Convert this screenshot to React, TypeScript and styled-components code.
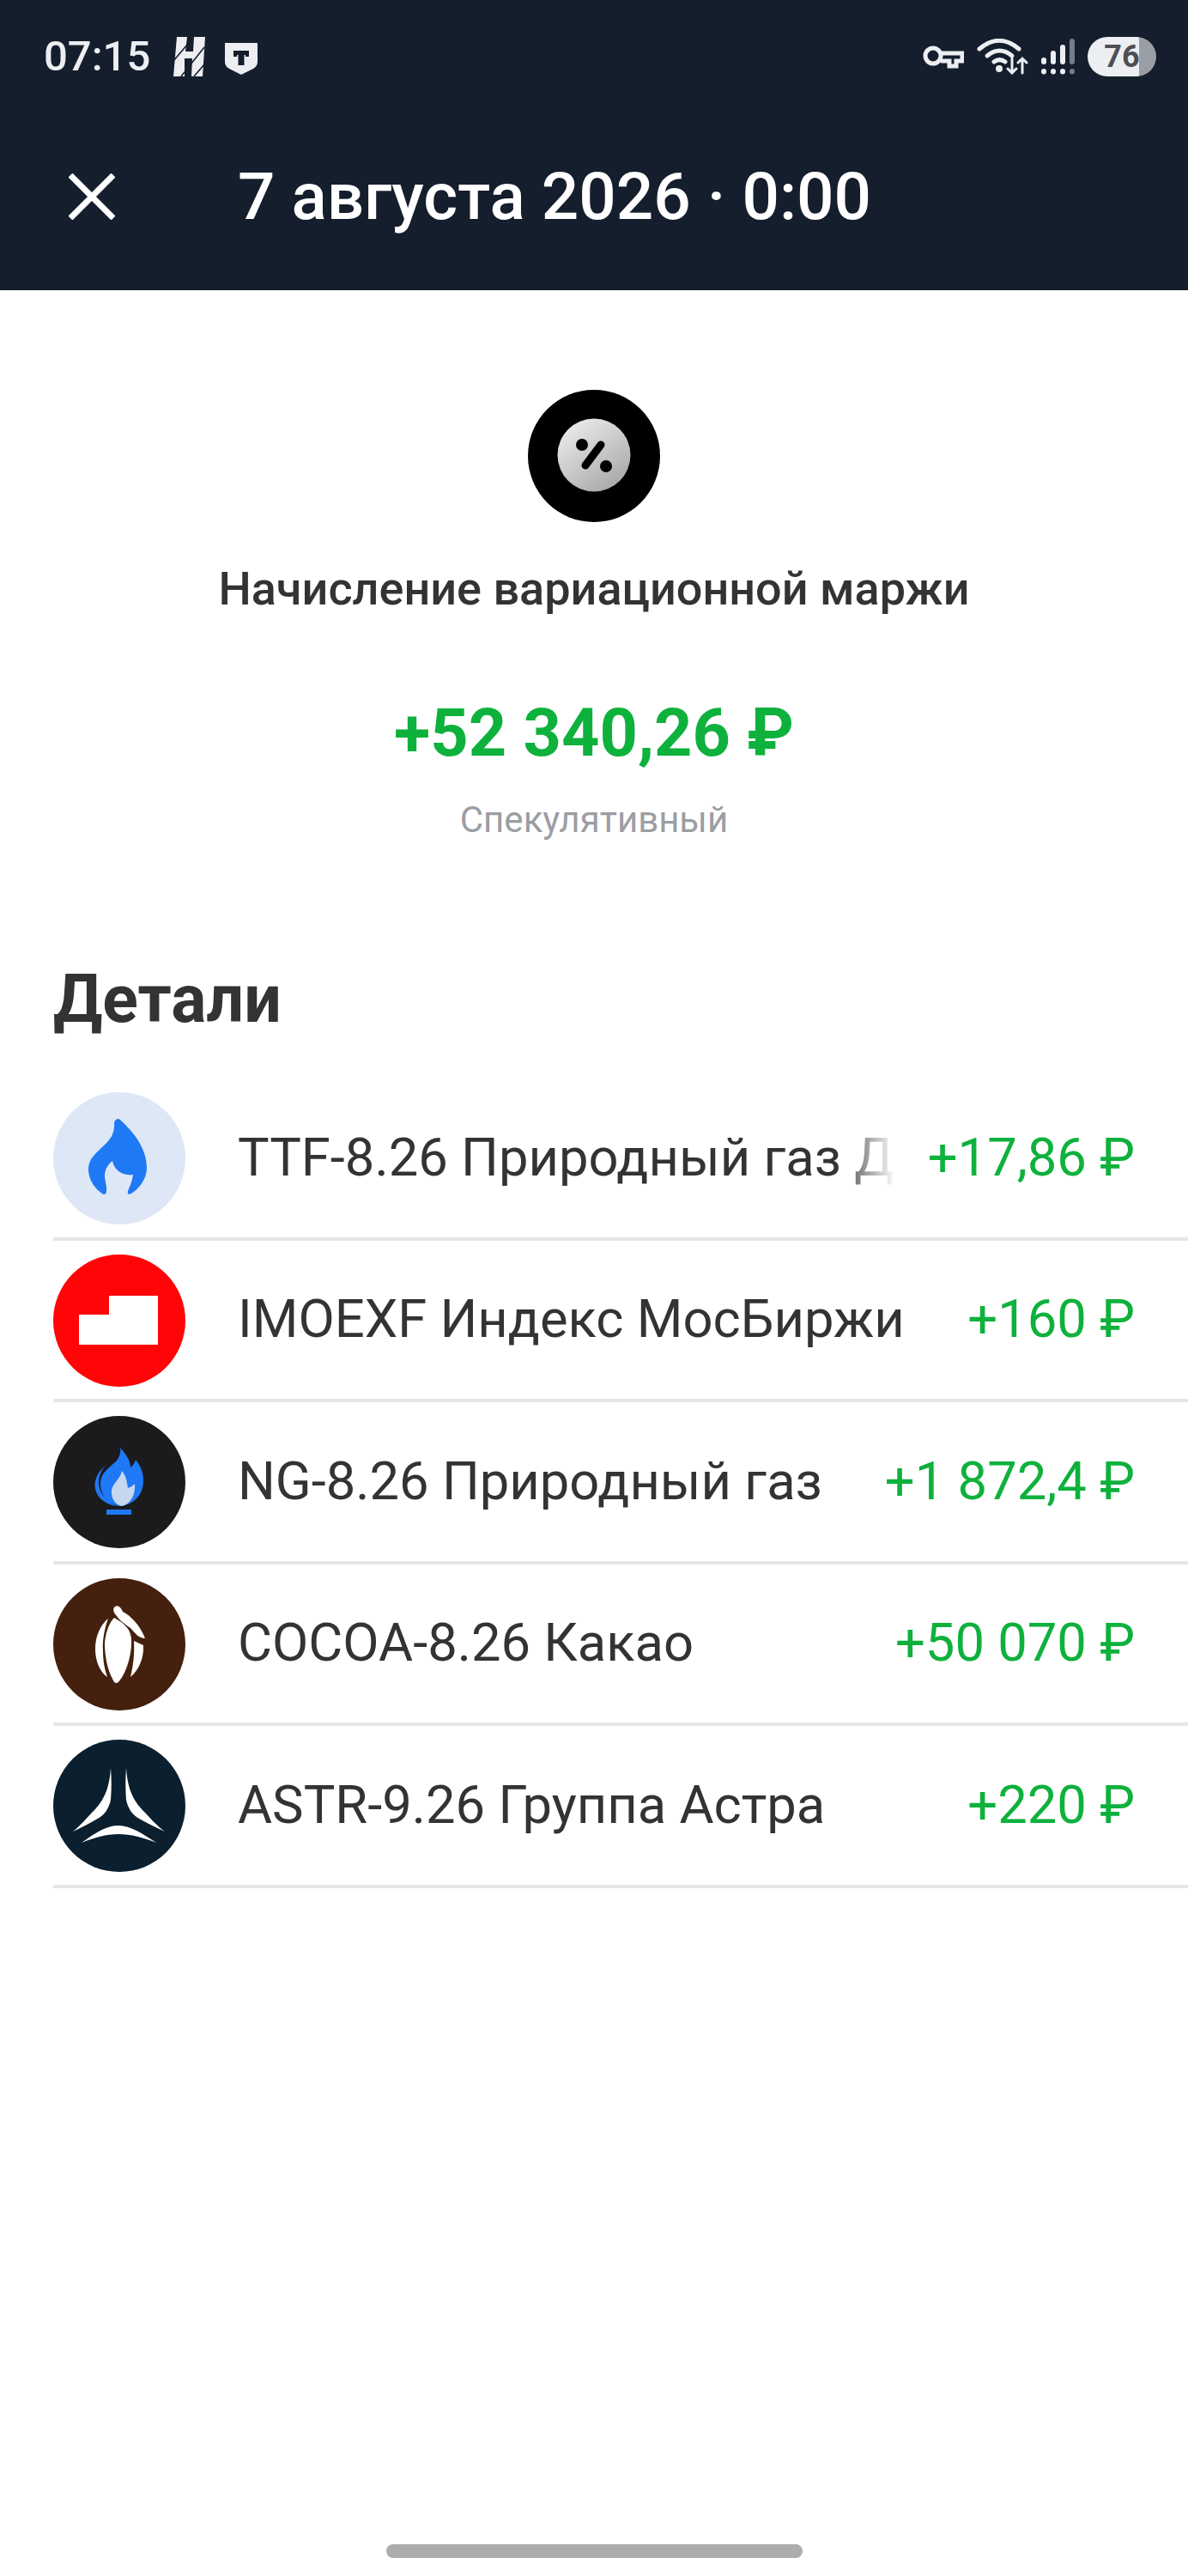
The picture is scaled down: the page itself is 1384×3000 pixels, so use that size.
import React from 'react';
import styled, { createGlobalStyle } from 'styled-components';

const GlobalStyle = createGlobalStyle`
  html, body { margin: 0; padding: 0; background: #fff; }
  body { font-family: Roboto, "Noto Sans", sans-serif; }
`;

const Page = styled.div`
  width: 1384px;
  height: 3000px;
  display: flex;
  flex-direction: column;
  overflow: hidden;
  background: #fff;
`;

const Header = styled.header`
  height: 338px;
  flex: none;
  background: #151e2d;
  color: #fff;
`;

const StatusBar = styled.div`
  height: 50px;
  padding: 41px 37px 0 51px;
  display: flex;
  align-items: center;
`;

const Time = styled.span`
  font-size: 49px;
  font-weight: 500;
  line-height: 50px;
  color: #eceef2;
  margin-right: 27px;
`;

const StatusGlyph = styled.svg<{ $gap?: number }>`
  display: block;
  flex: none;
  margin-right: ${(p) => p.$gap ?? 0}px;
`;

const Spring = styled.div`
  flex: 1;
`;

const Battery = styled.div`
  width: 80px;
  height: 46px;
  border-radius: 23px;
  flex: none;
  background: linear-gradient(90deg, #eceef1 0 75%, #9a9ea5 75% 100%);
  color: #4c4f54;
  font-size: 36px;
  font-weight: 700;
  line-height: 46px;
  text-align: center;
`;

const TitleBar = styled.div`
  display: flex;
  align-items: center;
  padding: 93px 0 0 80px;
  height: 90px;
`;

const Close = styled.svg`
  display: block;
  width: 54px;
  height: 54px;
  margin-right: 143px;
`;

const Title = styled.h1`
  margin: 0;
  font-size: 76.5px;
  font-weight: 500;
  line-height: 90px;
  white-space: nowrap;
`;

const Hero = styled.section`
  display: flex;
  flex-direction: column;
  align-items: center;
  padding-top: 116px;
`;

const OpIcon = styled.svg`
  display: block;
  width: 154px;
  height: 154px;
`;

const OpName = styled.div`
  margin-top: 48px;
  font-size: 54px;
  font-weight: 500;
  line-height: 60px;
  color: #333;
`;

const Total = styled.div`
  margin-top: 93px;
  font-size: 77.5px;
  font-weight: 700;
  line-height: 90px;
  color: #0eb13c;
`;

const Kind = styled.div`
  margin-top: 31px;
  font-size: 42px;
  line-height: 50px;
  color: #9a9ea4;
`;

const SectionTitle = styled.h2`
  margin: 139px 0 47px 62px;
  font-size: 77px;
  font-weight: 700;
  line-height: 90px;
  color: #333;
`;

const List = styled.div`
  margin-left: 62px;
`;

const Row = styled.div`
  display: flex;
  align-items: center;
  padding: 16px 62px 14.5px 0;
  border-bottom: 4px solid #e6e6e6;
`;

const Avatar = styled.svg`
  display: block;
  flex: none;
  width: 154px;
  height: 154px;
  margin-right: 61px;
`;

const Name = styled.div<{ $fade?: boolean }>`
  flex: 1;
  min-width: 0;
  margin-top: -3px;
  font-size: 61.5px;
  line-height: 70px;
  color: #333;
  white-space: nowrap;
  ${(p) =>
    p.$fade &&
    `
    -webkit-mask-image: linear-gradient(90deg, #000 calc(100% - 70px), transparent 100%);
    mask-image: linear-gradient(90deg, #000 calc(100% - 70px), transparent 100%);
  `}
`;

const Amount = styled.div`
  flex: none;
  margin-left: 38px;
  margin-top: -3px;
  font-size: 61.5px;
  line-height: 70px;
  color: #0eb13c;
  white-space: nowrap;
`;

const HomeBar = styled.div`
  width: 485px;
  height: 16px;
  flex: none;
  margin: auto auto 21px;
  border-radius: 8px;
  background: #adadad;
`;

const rows = [
  { id: 'ttf', name: 'TTF-8.26 Природный газ Д', amount: '+17,86 ₽', fade: true },
  { id: 'moex', name: 'IMOEXF Индекс МосБиржи', amount: '+160 ₽' },
  { id: 'ng', name: 'NG-8.26 Природный газ', amount: '+1 872,4 ₽' },
  { id: 'cocoa', name: 'COCOA-8.26 Какао', amount: '+50 070 ₽' },
  { id: 'astr', name: 'ASTR-9.26 Группа Астра', amount: '+220 ₽' },
];

function Logo({ id }: { id: string }) {
  if (id === 'ttf') {
    return (
      <Avatar viewBox="0 0 154 154">
        <circle cx="77" cy="77" r="77" fill="#dde7f5" />
        <path
          fill="#2079f4"
          d="M73 32C75 30 77 31 79 33C93 46 109 65 109 88C109 102 99 113 91 118C88 120 86 118 87 115C89 110 92 104 93 96C86 97 72 95 69 80C64 84 60 90 60 97C60 103 63 110 62 115C62 119 59 120 57 118C49 113 41 102 41 90C41 77 50 71 58 63C66 56 72 48 71 36C71 34 72 33 73 32Z"
        />
      </Avatar>
    );
  }
  if (id === 'moex') {
    return (
      <Avatar viewBox="0 0 154 154">
        <circle cx="77" cy="77" r="77" fill="#ff0508" />
        <polygon fill="#fff" points="30,70 65,70 65,48 122,48 122,105 30,105" />
      </Avatar>
    );
  }
  if (id === 'ng') {
    return (
      <Avatar viewBox="0 0 154 154">
        <circle cx="77" cy="77" r="77" fill="#1b1b1d" />
        <rect x="62" y="109" width="29" height="6" fill="#1f78f5" />
        <path fill="#1f78f5" d="M61 58C52 64 47 76 49 85C51 95 60 102 72 105C62 98 53 90 53 78C53 70 56 63 61 58Z" />
        <path
          fill="#1f78f5"
          d="M78 37C85 45 90 52 90 60C93 58 95 54 96 51C102 58 105 66 105 76C105 92 93 104 78 105C64 104 55 92 55 79C55 66 66 60 74 52C77 48 79 43 78 37Z"
        />
        <path fill="#c6d6ee" d="M80 64C85 70 86 77 87 84C90 83 93 81 95 79C96 92 90 103 80 105C73 104 67 96 68 87C69 78 78 74 80 64Z" />
      </Avatar>
    );
  }
  if (id === 'cocoa') {
    return (
      <Avatar viewBox="0 0 154 154">
        <circle cx="77" cy="77" r="77" fill="#45200e" />
        <g fill="#fff">
          <path d="M71 34C75 30 79 34 81 39C90 43 102 56 107 70C100 70 96 65 90 58C84 54 76 48 74 44C71 41 69 37 71 34Z" />
          <path d="M71 46C84 53 90 60 91 70C92 85 87 108 76 121C73 123 71 122 69 117C63 106 60 90 60 76C61 63 65 52 71 46Z" />
          <path d="M64 47C60 58 57 72 58 85C58 97 60 106 63 115C54 109 49 96 49 82C49 68 55 54 64 47Z" />
          <path d="M94 73L105 78C106 92 100 107 90 115C93 103 95 88 94 73Z" />
        </g>
      </Avatar>
    );
  }
  return (
    <Avatar viewBox="0 0 154 154">
      <circle cx="77" cy="77" r="77" fill="#0b1f2e" />
      <g fill="#fff">
        <path d="M67 33C66 50 62 68 48 82C40 90 32 100 23 107C33 102 42 98 50 93C60 88 65 80 67 70C68 58 68 45 67 33Z" />
        <path d="M85 33C86 50 90 68 104 82C112 90 120 100 130 107C120 102 110 98 102 93C92 88 87 80 85 70C84 58 84 45 85 33Z" />
        <path d="M33 120C50 108 62 100 76 100C90 100 105 110 120 120C105 114 90 110 76 110C62 110 48 114 33 120Z" />
      </g>
    </Avatar>
  );
}

export default function App() {
  return (
    <Page>
      <GlobalStyle />
      <Header>
        <StatusBar>
          <Time>07:15</Time>
          <StatusGlyph width="37" height="46" viewBox="0 0 37 46" $gap={23}>
            <path fill="#eceef2" d="M4 0H16L14 17H23L24 0H37L34 46H21L22 25H13L13 46H0Z" />
            <path stroke="#151e2d" strokeWidth="1.6" fill="none" d="M0 28L17 8M9 46L36 12M24 46L36 32" />
          </StatusGlyph>
          <StatusGlyph width="38" height="46" viewBox="0 0 38 46">
            <path fill="#eceef2" d="M1 7H37C37.6 7 38 7.4 38 8V29C38 33 36 35 33 37L19 44L5 37C2 35 0 33 0 29V8C0 7.4 0.4 7 1 7Z" />
            <path fill="#151e2d" d="M10 16H28V23H24V21H22.5V33H15.5V21H14V23H10Z" />
          </StatusGlyph>
          <Spring />
          <StatusGlyph width="48" height="28" viewBox="0 0 48 28" $gap={15} fill="none" stroke="#eceef2" strokeWidth="5">
            <circle cx="12" cy="13" r="9" />
            <path d="M21 10H46V19H39V25H31V19H21" />
          </StatusGlyph>
          <StatusGlyph width="60" height="42" viewBox="0 0 60 42" $gap={15} fill="none" stroke="#eceef2" strokeWidth="5" strokeLinecap="round">
            <path d="M3 12C18 -1 34 -1 49 12" />
            <path d="M12 20C22 12 31 12 41 20" />
            <path d="M20 27C24 24 29 24 33 27" />
            <circle cx="26" cy="35" r="3" fill="#eceef2" strokeWidth="2" />
            <path strokeWidth="3" d="M41 23V40M36 35L41 40L46 35" />
            <path strokeWidth="3" d="M53 40V23M48 28L53 23L58 28" />
          </StatusGlyph>
          <StatusGlyph width="39" height="42" viewBox="0 0 39 42" $gap={15} strokeLinecap="round" strokeWidth="6">
            <path stroke="#eceef2" d="M3 25V27M14 17V27M25 10V27" />
            <path stroke="#767c86" d="M36 3V27" />
            <path stroke="#eceef2" d="M3 38V38.5M14 38V38.5M25 38V38.5" />
            <path stroke="#767c86" d="M36 38V38.5" />
          </StatusGlyph>
          <Battery>76</Battery>
        </StatusBar>
        <TitleBar>
          <Close viewBox="0 0 54 54" fill="none" stroke="#fff" strokeWidth="7">
            <path d="M2 2L52 52M52 2L2 52" />
          </Close>
          <Title>7 августа 2026 · 0:00</Title>
        </TitleBar>
      </Header>

      <Hero>
        <OpIcon viewBox="0 0 154 154">
          <defs>
            <linearGradient id="coin" x1="0.1" y1="0" x2="0.8" y2="1">
              <stop offset="0" stopColor="#f0f0f0" />
              <stop offset="1" stopColor="#a6a6a6" />
            </linearGradient>
          </defs>
          <circle cx="77" cy="77" r="77" fill="#000" />
          <circle cx="77" cy="76" r="42.5" fill="url(#coin)" />
          <circle cx="63" cy="64" r="7" fill="#000" />
          <circle cx="91" cy="89" r="7" fill="#000" />
          <path d="M85 64L67 88" stroke="#000" strokeWidth="9" strokeLinecap="round" />
        </OpIcon>
        <OpName>Начисление вариационной маржи</OpName>
        <Total>+52 340,26 ₽</Total>
        <Kind>Спекулятивный</Kind>
      </Hero>

      <SectionTitle>Детали</SectionTitle>
      <List>
        {rows.map((r) => (
          <Row key={r.id}>
            <Logo id={r.id} />
            <Name $fade={r.fade}>{r.name}</Name>
            <Amount>{r.amount}</Amount>
          </Row>
        ))}
      </List>
      <HomeBar />
    </Page>
  );
}
